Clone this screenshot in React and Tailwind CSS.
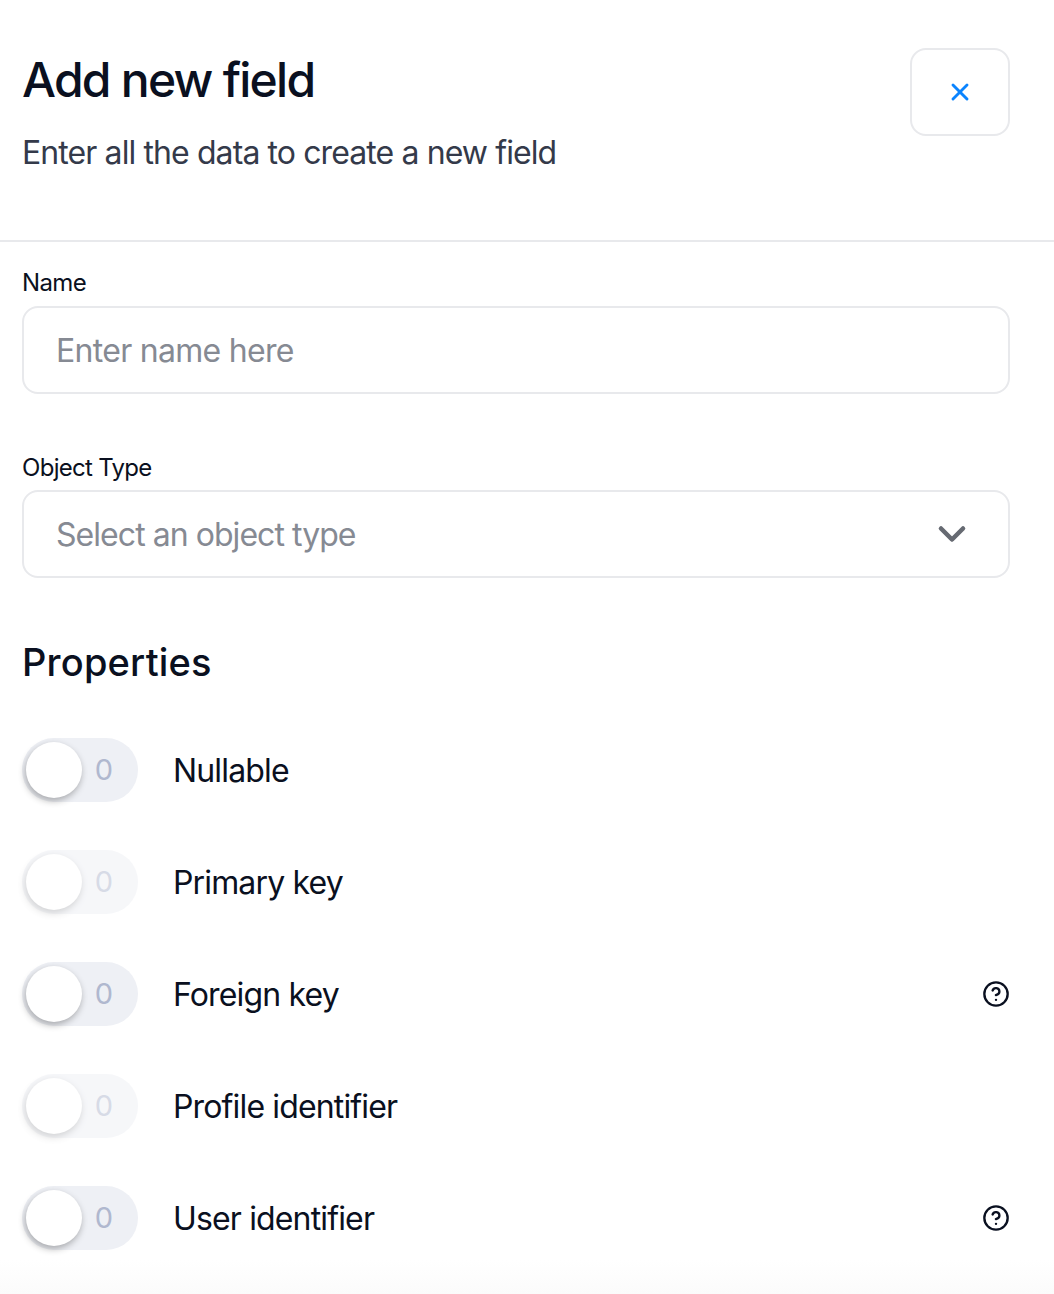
import { X, ChevronDown, CircleHelp } from 'lucide-react'

function Toggle({ dim }) {
  return (
    <div className={`relative h-16 w-[116px] shrink-0 rounded-full bg-[#eef0f5] ${dim ? 'opacity-50' : ''}`}>
      <span className="absolute right-[25px] top-[15px] text-[29px] leading-[34px] text-[#b0b8cf]">0</span>
      <div className="absolute left-[4px] top-[4px] h-[56px] w-[56px] rounded-full bg-white shadow-[-1px_3px_7px_rgba(0,0,0,0.3)]" />
    </div>
  )
}

function PropertyRow({ label, dim, help }) {
  return (
    <div className="flex h-16 items-center">
      <Toggle dim={dim} />
      <span className="ml-[35px] pt-[2px] text-[32px] tracking-[-0.85px] text-[#0a1020]">{label}</span>
      {help && <CircleHelp className="ml-auto h-[28px] w-[28px] text-[#0a1020]" strokeWidth={2} />}
    </div>
  )
}

function App() {
  return (
    <div className="relative h-[1294px] w-[1054px] overflow-hidden bg-white font-['Inter',sans-serif]">
      <div className="flex h-[242px] items-start justify-between border-b-2 border-[#e8e9ec] pl-[22px] pr-[44px] pt-[48px]">
        <div>
          <h1 className="text-[48px] font-medium leading-[64px] tracking-[-1.75px] text-[#0a1020]">Add new field</h1>
          <p className="mt-[17px] text-[32px] leading-[48px] tracking-[-0.9px] text-[#343a4a]">Enter all the data to create a new field</p>
        </div>
        <button className="flex h-[88px] w-[100px] items-center justify-center rounded-[16px] border-2 border-[#e8e9ec]">
          <X className="h-[28px] w-[28px] text-[#0a84ff]" strokeWidth={2.5} />
        </button>
      </div>

      <div className="pl-[22px] pr-[44px] pt-[25px]">
        <label className="block text-[24px] leading-[32px] tracking-[-0.6px] text-[#0a1020]">Name</label>
        <div className="mt-[7px] flex h-[88px] items-center rounded-[16px] border-2 border-[#e8e9ec] px-[32px] pt-[2px] text-[32px] tracking-[-0.7px] text-[#868a93]">
          Enter name here
        </div>

        <label className="mt-[58px] block text-[24px] leading-[32px] tracking-[-0.7px] text-[#0a1020]">Object Type</label>
        <div className="mt-[6px] flex h-[88px] items-center justify-between rounded-[16px] border-2 border-[#e8e9ec] pl-[32px] pr-[34px] text-[32px] tracking-[-0.95px] text-[#868a93]">
          <span className="pt-[2px]">Select an object type</span>
          <ChevronDown className="h-[44px] w-[44px] text-[#666a72]" strokeWidth={2.5} />
        </div>

        <h2 className="mt-[56px] text-[38px] font-medium leading-[56px] tracking-[0.2px] text-[#0a1020]">Properties</h2>

        <div className="mt-[48px] flex flex-col gap-[48px]">
          <PropertyRow label="Nullable" />
          <PropertyRow label="Primary key" dim />
          <PropertyRow label="Foreign key" help />
          <PropertyRow label="Profile identifier" dim />
          <PropertyRow label="User identifier" help />
        </div>
      </div>
      <div className="absolute inset-x-0 bottom-0 h-[34px] bg-gradient-to-b from-white to-[#fbfbfb]" />
    </div>
  )
}

export default App
